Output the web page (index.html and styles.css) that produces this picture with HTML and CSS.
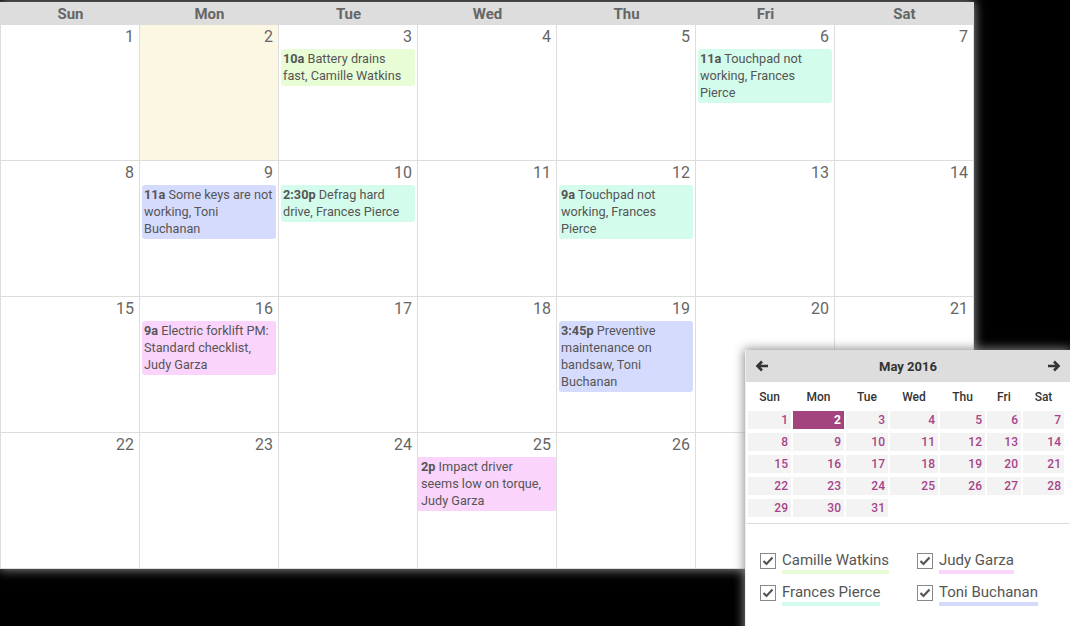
FILE: index.html
```html
<!DOCTYPE html>
<html>
<head>
<meta charset="utf-8">
<link rel="stylesheet" href="styles.css">
</head>
<body>
<div class="cal">
  <div class="head">
    <div>Sun</div><div>Mon</div><div>Tue</div><div>Wed</div><div>Thu</div><div>Fri</div><div>Sat</div>
  </div>
  <div class="week">
    <div class="day"><div class="num">1</div></div>
    <div class="day today"><div class="num">2</div></div>
    <div class="day"><div class="num">3</div><div class="ev green"><b>10a</b> Battery drains<br>fast, Camille Watkins</div></div>
    <div class="day"><div class="num">4</div></div>
    <div class="day"><div class="num">5</div></div>
    <div class="day"><div class="num">6</div><div class="ev mint"><b>11a</b> Touchpad not<br>working, Frances<br>Pierce</div></div>
    <div class="day"><div class="num">7</div></div>
  </div>
  <div class="week">
    <div class="day"><div class="num">8</div></div>
    <div class="day"><div class="num">9</div><div class="ev lav"><b>11a</b> Some keys are not<br>working, Toni<br>Buchanan</div></div>
    <div class="day"><div class="num">10</div><div class="ev mint"><b>2:30p</b> Defrag hard<br>drive, Frances Pierce</div></div>
    <div class="day"><div class="num">11</div></div>
    <div class="day"><div class="num">12</div><div class="ev mint"><b>9a</b> Touchpad not<br>working, Frances<br>Pierce</div></div>
    <div class="day"><div class="num">13</div></div>
    <div class="day"><div class="num">14</div></div>
  </div>
  <div class="week">
    <div class="day"><div class="num">15</div></div>
    <div class="day"><div class="num">16</div><div class="ev pink"><b>9a</b> Electric forklift PM:<br>Standard checklist,<br>Judy Garza</div></div>
    <div class="day"><div class="num">17</div></div>
    <div class="day"><div class="num">18</div></div>
    <div class="day"><div class="num">19</div><div class="ev lav"><b>3:45p</b> Preventive<br>maintenance on<br>bandsaw, Toni<br>Buchanan</div></div>
    <div class="day"><div class="num">20</div></div>
    <div class="day"><div class="num">21</div></div>
  </div>
  <div class="week">
    <div class="day"><div class="num">22</div></div>
    <div class="day"><div class="num">23</div></div>
    <div class="day"><div class="num">24</div></div>
    <div class="day"><div class="num">25</div><div class="ev pink full"><b>2p</b> Impact driver<br>seems low on torque,<br>Judy Garza</div></div>
    <div class="day"><div class="num">26</div></div>
    <div class="day"><div class="num">27</div></div>
    <div class="day"><div class="num">28</div></div>
  </div>
</div>

<div class="mini">
  <div class="mhead">
    <svg class="arrow" width="14" height="12" viewBox="0 0 14 12"><path d="M13 6H3M7 1.5L2.5 6L7 10.5" fill="none" stroke="#333" stroke-width="2.6"/></svg>
    <span class="mtitle">May 2016</span>
    <svg class="arrow" width="14" height="12" viewBox="0 0 14 12"><path d="M1 6H11M7 1.5L11.5 6L7 10.5" fill="none" stroke="#333" stroke-width="2.6"/></svg>
  </div>
  <div class="mdow">
    <div>Sun</div><div>Mon</div><div>Tue</div><div>Wed</div><div>Thu</div><div>Fri</div><div>Sat</div>
  </div>
  <div class="mdates">
    <div>1</div><div class="sel">2</div><div>3</div><div>4</div><div>5</div><div>6</div><div>7</div>
    <div>8</div><div>9</div><div>10</div><div>11</div><div>12</div><div>13</div><div>14</div>
    <div>15</div><div>16</div><div>17</div><div>18</div><div>19</div><div>20</div><div>21</div>
    <div>22</div><div>23</div><div>24</div><div>25</div><div>26</div><div>27</div><div>28</div>
    <div>29</div><div>30</div><div>31</div>
  </div>
  <div class="legend">
    <div class="item"><span class="cb"><svg width="12" height="10" viewBox="0 0 12 10"><path d="M1.5 5L4.5 8L10.5 1.5" fill="none" stroke="#555" stroke-width="2.2"/></svg></span><span class="lbl u-green">Camille Watkins</span></div>
    <div class="item"><span class="cb"><svg width="12" height="10" viewBox="0 0 12 10"><path d="M1.5 5L4.5 8L10.5 1.5" fill="none" stroke="#555" stroke-width="2.2"/></svg></span><span class="lbl u-pink">Judy Garza</span></div>
    <div class="item"><span class="cb"><svg width="12" height="10" viewBox="0 0 12 10"><path d="M1.5 5L4.5 8L10.5 1.5" fill="none" stroke="#555" stroke-width="2.2"/></svg></span><span class="lbl u-mint">Frances Pierce</span></div>
    <div class="item"><span class="cb"><svg width="12" height="10" viewBox="0 0 12 10"><path d="M1.5 5L4.5 8L10.5 1.5" fill="none" stroke="#555" stroke-width="2.2"/></svg></span><span class="lbl u-lav">Toni Buchanan</span></div>
  </div>
</div>
</body>
</html>
```

FILE: styles.css
```css
html, body {
  margin: 0;
  padding: 0;
  background: #000;
  overflow: hidden;
  height: 626px;
}
body {
  font-family: Roboto, "Liberation Sans", Arial, sans-serif;
}
.cal {
  margin-top: 2px;
  width: 974px;
  box-sizing: border-box;
  background: #fff;
  border-left: 1px solid #ddd;
  box-shadow: 0 0 10px 1px #8a8a8a;
}
.head {
  display: grid;
  grid-template-columns: repeat(7, 139px);
  background: #ddd;
  height: 23px;
}
.head div {
  text-align: center;
  font-weight: bold;
  font-size: 15px;
  line-height: 23px;
  padding-top: 1px;
  color: #666;
}
.week {
  display: grid;
  grid-template-columns: repeat(7, 139px);
  height: 136px;
}
.day {
  border-right: 1px solid #ddd;
  border-bottom: 1px solid #ddd;
  box-sizing: border-box;
}
.today {
  background: #fcf7e3;
}
.num {
  height: 24px;
  box-sizing: border-box;
  padding: 2px 5px 0 0;
  text-align: right;
  font-size: 16px;
  line-height: 19px;
  color: #666;
}
.ev {
  margin: 0 2px 0 2px;
  border-radius: 3px;
  padding: 1px 2px 2px 2px;
  font-size: 12.7px;
  line-height: 17px;
  color: #555;
  white-space: nowrap;
  overflow: hidden;
}
.ev b {
  font-weight: bold;
}
.ev.full {
  margin: 0;
  border-radius: 0;
  padding-left: 3px;
}
.green { background: #e8fdd6; }
.mint { background: #d4fcec; }
.lav { background: #d5dbfd; }
.pink { background: #fbd4fb; }

.mini {
  position: absolute;
  left: 745px;
  top: 350px;
  width: 325px;
  height: 300px;
  background: #fff;
  box-shadow: 0 0 10px 1px #8a8a8a;
  border-left: 1px solid #eee;
  box-sizing: border-box;
}
.mhead {
  height: 32px;
  background: #ddd;
  display: flex;
  align-items: center;
  justify-content: space-between;
  padding: 0 9px 0 9px;
}
.mtitle {
  font-size: 13px;
  font-weight: bold;
  color: #333;
  padding-top: 1px;
}
.mdow, .mdates {
  display: grid;
  grid-template-columns: 43px 51px 42px 48px 45px 34px 41px;
  column-gap: 2px;
  padding-left: 2px;
}
.mdow {
  margin-top: 3px;
  height: 24px;
}
.mdow div {
  text-align: center;
  font-size: 12px;
  font-weight: 500;
  line-height: 24px;
  color: #333;
}
.mdates {
  margin-top: 2px;
  row-gap: 4px;
  grid-auto-rows: 18px;
}
.mdates div {
  background: #f3f3f3;
  text-align: right;
  padding-right: 3px;
  font-size: 12px;
  font-weight: 500;
  line-height: 19px;
  color: #a6448a;
}
.mdates div.sel {
  background: #a3447f;
  color: #fff;
  font-weight: bold;
}
.legend {
  margin-top: 6px;
  border-top: 1px solid #ddd;
  padding: 28px 0 0 14px;
  display: grid;
  grid-template-columns: 157px 150px;
  row-gap: 10px;
}
.item {
  display: flex;
  align-items: flex-start;
  gap: 6px;
}
.cb {
  width: 16px;
  height: 16px;
  box-sizing: border-box;
  border: 1px solid #888;
  display: flex;
  align-items: center;
  justify-content: center;
  margin-top: 1px;
}
.lbl {
  font-size: 15px;
  line-height: 17px;
  color: #555;
  padding-bottom: 1px;
  border-bottom: 4px solid transparent;
}
.u-green { border-bottom-color: #e8fdd6; }
.u-mint { border-bottom-color: #d4fcec; }
.u-lav { border-bottom-color: #d5dbfd; }
.u-pink { border-bottom-color: #fbd4fb; }
```
